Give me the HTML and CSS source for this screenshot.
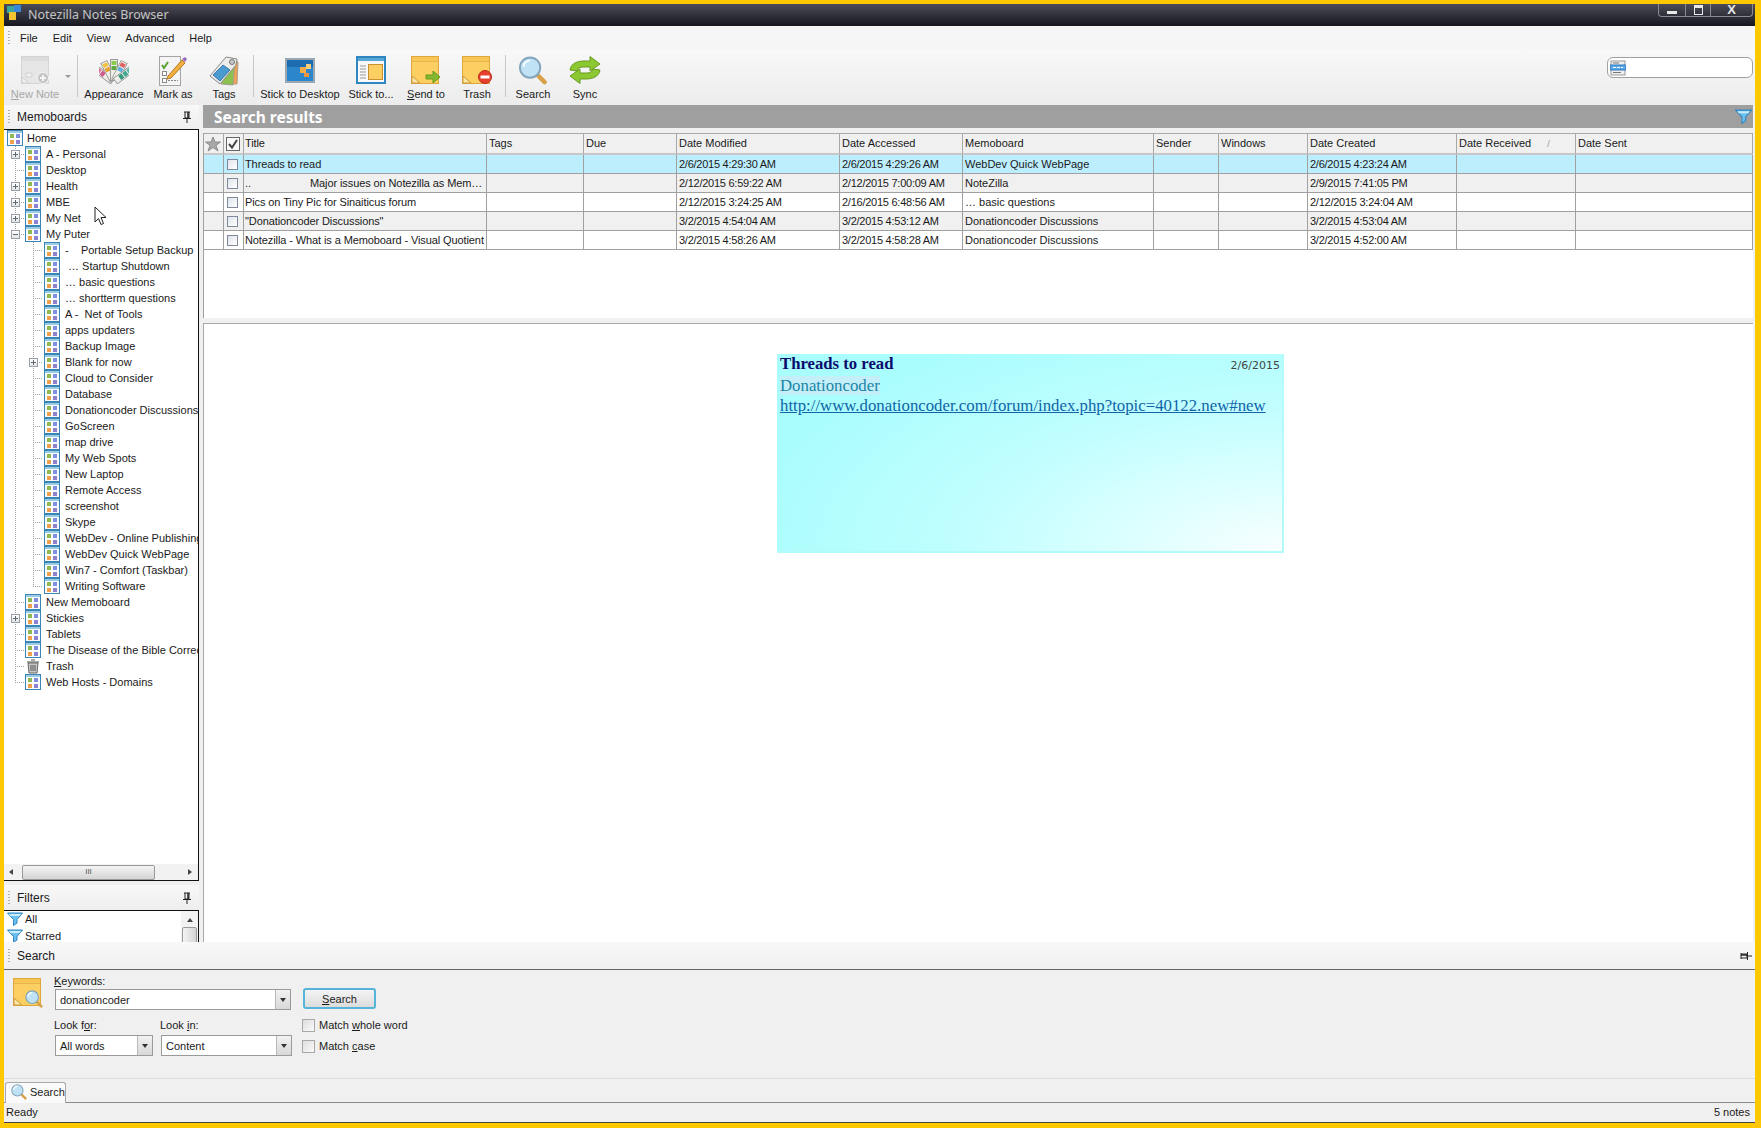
FILE: index.html
```html
<!DOCTYPE html>
<html lang="en">
<head>
    <meta charset="UTF-8">
    <title>Notezilla Notes Browser</title>
    <link rel="stylesheet" href="styles.css">
</head>
<body>

<svg class="defs" width="0" height="0">
    <symbol id="board" viewBox="0 0 16 16">
        <rect x="0.5" y="0.5" width="15" height="15" fill="#f8fbfd" stroke="#3b86b4"/>
        <rect x="1" y="1" width="14" height="2" fill="#9ccbe6"/>
        <rect x="3" y="4" width="4" height="4" fill="#8fb850"/>
        <rect x="9" y="4" width="4" height="4" fill="#7f8fe0"/>
        <rect x="3" y="10" width="4" height="4" fill="#eea04a"/>
        <rect x="9" y="10" width="4" height="4" fill="#8f80d0"/>
    </symbol>
    <symbol id="funnel" viewBox="0 0 16 14">
        <path d="M0.5 1 H15.5 L10 7.5 V11 L6.5 13.5 V7.5 Z" fill="#6cc0ee" stroke="#2f86c0"/>
        <path d="M2 2 H14 L12.5 4 H3.5 Z" fill="#c8ecfb"/>
    </symbol>
    <symbol id="sticky" viewBox="0 0 28 28">
        <rect x="0.5" y="0.5" width="27" height="27" fill="#fbcf62" stroke="#dfa83f"/>
        <rect x="1" y="1" width="26" height="4" fill="#f9c655"/>
        <path d="M1 5.500 H27" stroke="#e8b44c"/>
        <path d="M1 20 L9 27 H1 Z" fill="#fde7a6" stroke="#c9973a"/>
    </symbol>
    <symbol id="lens" viewBox="0 0 30 30">
        <path d="M19 19 L27 27" stroke="#d8a048" stroke-width="4.500" stroke-linecap="round"/>
        <circle cx="12" cy="12" r="10.500" fill="#bfe2f5" stroke="#84a6bc" stroke-width="2"/>
        <path d="M5 11 A7.500 7.500 0 0 1 12 4.500" fill="none" stroke="#fff" stroke-width="2"/>
    </symbol>
    <symbol id="pin" viewBox="0 0 8 12">
        <path d="M1 1 H7 M2 1 V7 H6 V1 M0 7.500 H8 M4 8 V12" fill="none" stroke="#222"/>
        <path d="M5 1 V7" stroke="#222" stroke-width="1.500"/>
    </symbol>
    <symbol id="swatch" viewBox="0 0 8 22">
        <rect x="0.500" y="0.500" width="7" height="21" fill="#f0eee8" stroke="#9a9a9a"/>
    </symbol>
</svg>

<div class="window">
    <div class="titlebar">
        <svg class="app-icon" width="16" height="16" viewBox="0 0 16 16">
            <rect x="1" y="1" width="7" height="7" fill="#3aa6a0"/>
            <rect x="8" y="0" width="7" height="7" fill="#3a86d8"/>
            <rect x="3" y="7" width="7" height="8" fill="#f4c430"/>
        </svg>
        <span class="window-title">Notezilla Notes Browser</span>
        <div class="window-buttons">
            <span class="win-btn win-min"><i></i></span>
            <span class="win-btn win-restore"><i></i></span>
            <span class="win-btn win-close">X</span>
        </div>
    </div>

    <div class="menubar">
        <span class="gripper"></span>
        <span class="menu-item">File</span>
        <span class="menu-item">Edit</span>
        <span class="menu-item">View</span>
        <span class="menu-item">Advanced</span>
        <span class="menu-item">Help</span>
    </div>

    <div class="toolbar">
        <div class="tool tool-new disabled">
            <svg width="32" height="28" viewBox="0 0 32 28">
                <rect x="2.500" y="0.500" width="27" height="27" fill="#e6e6e6" stroke="#d4d4d4"/>
                <rect x="3" y="1" width="26" height="4" fill="#dcdcdc"/>
                <path d="M3 21 L10 27 H3 Z M7 17 H13 V21 H7 Z" fill="#f0f0f0" stroke="#d0d0d0"/>
                <circle cx="24" cy="22" r="5.500" fill="#c4c4c4" stroke="#f4f4f4"/>
                <path d="M24 19 V25 M21 22 H27" stroke="#f6f6f6" stroke-width="2"/>
            </svg>
            <span><u>N</u>ew Note</span>
        </div>
        <span class="tool-drop"></span>
        <span class="tool-sep"></span>
        <div class="tool tool-appearance">
            <svg width="30" height="26" viewBox="0 0 30 26">
                <g transform="rotate(-54 15 24)">
                    <use href="#swatch" x="11" y="1" width="8" height="22"/>
                    <rect x="12.500" y="3" width="5" height="4" fill="#e0709a"/><rect x="12.500" y="8" width="5" height="4" fill="#d05a8a"/>
                </g>
                <g transform="rotate(-27 15 24)">
                    <use href="#swatch" x="11" y="1" width="8" height="22"/>
                    <rect x="12.500" y="3" width="5" height="4" fill="#f0c040"/><rect x="12.500" y="8" width="5" height="4" fill="#e8a030"/>
                </g>
                <g>
                    <use href="#swatch" x="11" y="1" width="8" height="22"/>
                    <rect x="12.500" y="3" width="5" height="4" fill="#8cc850"/><rect x="12.500" y="8" width="5" height="4" fill="#60a840"/>
                </g>
                <g transform="rotate(27 15 24)">
                    <use href="#swatch" x="11" y="1" width="8" height="22"/>
                    <rect x="12.500" y="3" width="5" height="4" fill="#e06060"/><rect x="12.500" y="8" width="5" height="4" fill="#60b0e0"/>
                </g>
                <g transform="rotate(54 15 24)">
                    <use href="#swatch" x="11" y="1" width="8" height="22"/>
                    <rect x="12.500" y="3" width="5" height="4" fill="#50b8a8"/><rect x="12.500" y="8" width="5" height="4" fill="#40a890"/><rect x="12.500" y="13" width="5" height="4" fill="#389880"/>
                </g>
            </svg>
            <span>Appearance</span>
        </div>
        <div class="tool tool-mark">
            <svg width="30" height="30" viewBox="0 0 30 30">
                <rect x="1.500" y="0.500" width="21" height="29" fill="#f4f4f4" stroke="#a4a4a4"/>
                <path d="M4 9 L6 12 L10 6" fill="none" stroke="#58a030" stroke-width="2"/>
                <rect x="4.500" y="15.500" width="4" height="4" fill="#fff" stroke="#888"/>
                <rect x="4.500" y="22.500" width="4" height="4" fill="#fff" stroke="#888"/>
                <path d="M10 24.500 H20" stroke="#888" stroke-dasharray="2 1"/>
                <path d="M10 20 L24 4 L27 7 L13 22 L9 23 Z" fill="#f0b040" stroke="#b87820"/>
                <path d="M24 3 L27 6 L29 3 L27 1 Z" fill="#9a6ac0"/>
            </svg>
            <span>Mark as</span>
        </div>
        <div class="tool tool-tags">
            <svg width="30" height="30" viewBox="0 0 30 30">
                <path d="M22 2 L29 6 L28 28 L18 28 Z" fill="#f0a050" stroke="#b0a090"/>
                <path d="M18 3 L26 4 L24 29 L12 28 Z" fill="#8cc050" stroke="#a0a090"/>
                <path d="M17 1 L28 3 L27 9 L11 28 L1 20 Z" fill="#ecece8" stroke="#8a8a8a"/>
                <path d="M14 9 L21 14 L11 25 L4 19 Z" fill="#4a9ad0" stroke="#3a7ab0"/>
                <circle cx="23" cy="6" r="2.500" fill="#c8c8c8" stroke="#777"/>
            </svg>
            <span>Tags</span>
        </div>
        <span class="tool-sep"></span>
        <div class="tool tool-desktop">
            <svg width="30" height="25" viewBox="0 0 30 25">
                <rect x="1" y="1" width="28" height="23" fill="#2c86cc" stroke="#9aa8b4" stroke-width="2"/>
                <rect x="2" y="2" width="26" height="7" fill="#1e6cb0"/>
                <rect x="15" y="9" width="6" height="6" fill="#f2ad4a"/>
                <rect x="21" y="6" width="5" height="5" fill="#f6cd7a"/>
                <rect x="19" y="15" width="5" height="4" fill="#ea9440"/>
            </svg>
            <span>Stick to Desktop</span>
        </div>
        <div class="tool tool-stick">
            <svg width="30" height="28" viewBox="0 0 30 28">
                <rect x="1" y="1" width="28" height="26" fill="#f8f8f8" stroke="#2f86c0" stroke-width="2"/>
                <rect x="2" y="2" width="26" height="3" fill="#58a8d8"/>
                <path d="M4 10 H10 M4 13 H10 M4 16 H10 M4 19 H10 M4 22 H10" stroke="#999"/>
                <rect x="12.500" y="8.500" width="14" height="15" fill="#fbcf62" stroke="#c89030"/>
            </svg>
            <span>Stick to...</span>
        </div>
        <div class="tool tool-send">
            <svg width="30" height="28" viewBox="0 0 30 28">
                <use href="#sticky" width="28" height="28"/>
                <path d="M15 19 H22 V15 L29 21 L22 27 V23 H15 Z" fill="#84b830" stroke="#6a9a20"/>
            </svg>
            <span><u>S</u>end to</span>
        </div>
        <div class="tool tool-trash">
            <svg width="30" height="28" viewBox="0 0 30 28">
                <use href="#sticky" width="28" height="28"/>
                <circle cx="23" cy="21" r="6.500" fill="#e8402e" stroke="#b82c1e"/>
                <rect x="18.500" y="19.500" width="9" height="3" fill="#fff"/>
            </svg>
            <span>Trash</span>
        </div>
        <span class="tool-sep"></span>
        <div class="tool tool-search">
            <svg width="30" height="29" viewBox="0 0 30 30"><use href="#lens"/></svg>
            <span>Search</span>
        </div>
        <div class="tool tool-sync">
            <svg width="32" height="28" viewBox="0 0 32 28">
                <path d="M1 14 C2 7 9 5 15 5 H21 V0.500 L31 8 L21 15 V11 H14 C11 11 9 12 8 15 Z" fill="#8cc832" stroke="#6a9a20"/>
                <path d="M31 14 C30 21 23 23 17 23 H11 V27.500 L1 20 L11 13 V17 H18 C21 17 23 16 24 13 Z" fill="#8cc832" stroke="#6a9a20"/>
            </svg>
            <span>Sync</span>
        </div>
        <div class="quick-search">
            <svg width="16" height="16" viewBox="0 0 16 16">
                <rect x="1" y="1" width="14" height="14" fill="#eee" stroke="#999"/>
                <rect x="0" y="5" width="16" height="5" fill="#5aa8e8" stroke="#2f78c0"/>
                <path d="M3 3 H9 M3 12.500 H11" stroke="#777"/>
                <path d="M3 7.500 H13" stroke="#fff" stroke-dasharray="3 1"/>
            </svg>
        </div>
    </div>

    <div class="main">
        <aside class="sidebar">
            <div class="pane-head memoboards-head">
                <span class="gripper"></span>
                <span class="pane-title">Memoboards</span>
                <svg class="pin"><use href="#pin"/></svg>
            </div>
            <div class="tree-box">
                <div class="tree">
                    <div class="row home"><svg class="board"><use href="#board"/></svg><span>Home</span></div>
                    <ul class="level">
                        <li><div class="row"><span class="gutter"><b class="exp"></b></span><svg class="board"><use href="#board"/></svg><span>A - Personal</span></div></li>
                        <li><div class="row"><span class="gutter"></span><svg class="board"><use href="#board"/></svg><span>Desktop</span></div></li>
                        <li><div class="row"><span class="gutter"><b class="exp"></b></span><svg class="board"><use href="#board"/></svg><span>Health</span></div></li>
                        <li><div class="row"><span class="gutter"><b class="exp"></b></span><svg class="board"><use href="#board"/></svg><span>MBE</span></div></li>
                        <li><div class="row"><span class="gutter"><b class="exp"></b></span><svg class="board"><use href="#board"/></svg><span>My Net</span></div></li>
                        <li>
                            <div class="row"><span class="gutter"><b class="exp open"></b></span><svg class="board"><use href="#board"/></svg><span>My Puter</span></div>
                            <ul class="level sub">
                                <li><div class="row"><span class="gutter"></span><svg class="board"><use href="#board"/></svg><span>-    Portable Setup Backup</span></div></li>
                                <li><div class="row"><span class="gutter"></span><svg class="board"><use href="#board"/></svg><span> … Startup Shutdown</span></div></li>
                                <li><div class="row"><span class="gutter"></span><svg class="board"><use href="#board"/></svg><span>… basic questions</span></div></li>
                                <li><div class="row"><span class="gutter"></span><svg class="board"><use href="#board"/></svg><span>… shortterm questions</span></div></li>
                                <li><div class="row"><span class="gutter"></span><svg class="board"><use href="#board"/></svg><span>A -  Net of Tools</span></div></li>
                                <li><div class="row"><span class="gutter"></span><svg class="board"><use href="#board"/></svg><span>apps updaters</span></div></li>
                                <li><div class="row"><span class="gutter"></span><svg class="board"><use href="#board"/></svg><span>Backup Image</span></div></li>
                                <li><div class="row"><span class="gutter"><b class="exp"></b></span><svg class="board"><use href="#board"/></svg><span>Blank for now</span></div></li>
                                <li><div class="row"><span class="gutter"></span><svg class="board"><use href="#board"/></svg><span>Cloud to Consider</span></div></li>
                                <li><div class="row"><span class="gutter"></span><svg class="board"><use href="#board"/></svg><span>Database</span></div></li>
                                <li><div class="row"><span class="gutter"></span><svg class="board"><use href="#board"/></svg><span>Donationcoder Discussions</span></div></li>
                                <li><div class="row"><span class="gutter"></span><svg class="board"><use href="#board"/></svg><span>GoScreen</span></div></li>
                                <li><div class="row"><span class="gutter"></span><svg class="board"><use href="#board"/></svg><span>map drive</span></div></li>
                                <li><div class="row"><span class="gutter"></span><svg class="board"><use href="#board"/></svg><span>My Web Spots</span></div></li>
                                <li><div class="row"><span class="gutter"></span><svg class="board"><use href="#board"/></svg><span>New Laptop</span></div></li>
                                <li><div class="row"><span class="gutter"></span><svg class="board"><use href="#board"/></svg><span>Remote Access</span></div></li>
                                <li><div class="row"><span class="gutter"></span><svg class="board"><use href="#board"/></svg><span>screenshot</span></div></li>
                                <li><div class="row"><span class="gutter"></span><svg class="board"><use href="#board"/></svg><span>Skype</span></div></li>
                                <li><div class="row"><span class="gutter"></span><svg class="board"><use href="#board"/></svg><span>WebDev - Online Publishing</span></div></li>
                                <li><div class="row"><span class="gutter"></span><svg class="board"><use href="#board"/></svg><span>WebDev Quick WebPage</span></div></li>
                                <li><div class="row"><span class="gutter"></span><svg class="board"><use href="#board"/></svg><span>Win7 - Comfort (Taskbar)</span></div></li>
                                <li class="last"><div class="row"><span class="gutter"></span><svg class="board"><use href="#board"/></svg><span>Writing Software</span></div></li>
                            </ul>
                        </li>
                        <li><div class="row"><span class="gutter"></span><svg class="board"><use href="#board"/></svg><span>New Memoboard</span></div></li>
                        <li><div class="row"><span class="gutter"><b class="exp"></b></span><svg class="board"><use href="#board"/></svg><span>Stickies</span></div></li>
                        <li><div class="row"><span class="gutter"></span><svg class="board"><use href="#board"/></svg><span>Tablets</span></div></li>
                        <li><div class="row"><span class="gutter"></span><svg class="board"><use href="#board"/></svg><span>The Disease of the Bible Correction</span></div></li>
                        <li><div class="row"><span class="gutter"></span><svg class="board" viewBox="0 0 16 16">
                                <path d="M3 5 H13 L12 15 H4 Z" fill="#c8c8c8" stroke="#666"/>
                                <path d="M2 4 H14 M6 2 H10 M6 7 V13 M8 7 V13 M10 7 V13" stroke="#555"/>
                            </svg><span>Trash</span></div></li>
                        <li class="last"><div class="row"><span class="gutter"></span><svg class="board"><use href="#board"/></svg><span>Web Hosts - Domains</span></div></li>
                    </ul>
                </div>
                <div class="hscroll">
                    <span class="arrow-left"></span>
                    <span class="hthumb">III</span>
                    <span class="arrow-right"></span>
                </div>
            </div>
            <div class="pane-head filters-head">
                <span class="gripper"></span>
                <span class="pane-title">Filters</span>
                <svg class="pin"><use href="#pin"/></svg>
            </div>
            <div class="filter-box">
                <div class="filter-list">
                    <div class="filter-row"><svg class="funnel"><use href="#funnel"/></svg><span>All</span></div>
                    <div class="filter-row"><svg class="funnel"><use href="#funnel"/></svg><span>Starred</span></div>
                </div>
                <div class="vscroll">
                    <span class="arrow-up"></span>
                    <span class="vthumb"></span>
                </div>
            </div>
        </aside>

        <section class="content">
            <div class="results-bar">
                <span>Search results</span>
                <svg class="results-funnel"><use href="#funnel"/></svg>
            </div>
            <div class="list-pane">
                <table class="notes">
                    <colgroup>
                        <col class="c-star"><col class="c-check"><col class="c-title"><col class="c-tags"><col class="c-due">
                        <col class="c-mod"><col class="c-acc"><col class="c-board"><col class="c-sender"><col class="c-win">
                        <col class="c-created"><col class="c-recv"><col class="c-sent">
                    </colgroup>
                    <thead>
                        <tr>
                            <th class="icon-cell">
                                <svg width="16" height="16" viewBox="0 0 16 16"><path d="M8 1 L10 6 H15.500 L11 9.500 L13 15 L8 11.500 L3 15 L5 9.500 L0.500 6 H6 Z" fill="#a8a8a8" stroke="#8c8c8c"/></svg>
                            </th>
                            <th class="icon-cell">
                                <svg width="14" height="14" viewBox="0 0 14 14"><rect x="0.500" y="0.500" width="13" height="13" fill="#f8f8f8" stroke="#666"/><path d="M3 7 L6 10.500 L11 3" fill="none" stroke="#444" stroke-width="2"/></svg>
                            </th>
                            <th>Title</th><th>Tags</th><th>Due</th><th>Date Modified</th><th>Date Accessed</th><th>Memoboard</th>
                            <th>Sender</th><th>Windows</th><th>Date Created</th><th class="sorted">Date Received<i>/</i></th><th>Date Sent</th>
                        </tr>
                    </thead>
                    <tbody>
                        <tr class="selected">
                            <td></td><td class="icon-cell"><span class="box"></span></td><td>Threads to read</td><td></td><td></td>
                            <td>2/6/2015 4:29:30 AM</td><td>2/6/2015 4:29:26 AM</td><td>WebDev Quick WebPage</td><td></td><td></td>
                            <td>2/6/2015 4:23:24 AM</td><td></td><td></td>
                        </tr>
                        <tr class="alt">
                            <td></td><td class="icon-cell"><span class="box"></span></td><td>..                    Major issues on Notezilla as Mem…</td><td></td><td></td>
                            <td>2/12/2015 6:59:22 AM</td><td>2/12/2015 7:00:09 AM</td><td>NoteZilla</td><td></td><td></td>
                            <td>2/9/2015 7:41:05 PM</td><td></td><td></td>
                        </tr>
                        <tr>
                            <td></td><td class="icon-cell"><span class="box"></span></td><td>Pics on Tiny Pic for Sinaiticus forum</td><td></td><td></td>
                            <td>2/12/2015 3:24:25 AM</td><td>2/16/2015 6:48:56 AM</td><td>… basic questions</td><td></td><td></td>
                            <td>2/12/2015 3:24:04 AM</td><td></td><td></td>
                        </tr>
                        <tr class="alt">
                            <td></td><td class="icon-cell"><span class="box"></span></td><td>"Donationcoder Discussions"</td><td></td><td></td>
                            <td>3/2/2015 4:54:04 AM</td><td>3/2/2015 4:53:12 AM</td><td>Donationcoder Discussions</td><td></td><td></td>
                            <td>3/2/2015 4:53:04 AM</td><td></td><td></td>
                        </tr>
                        <tr>
                            <td></td><td class="icon-cell"><span class="box"></span></td><td>Notezilla - What is a Memoboard - Visual Quotient</td><td></td><td></td>
                            <td>3/2/2015 4:58:26 AM</td><td>3/2/2015 4:58:28 AM</td><td>Donationcoder Discussions</td><td></td><td></td>
                            <td>3/2/2015 4:52:00 AM</td><td></td><td></td>
                        </tr>
                    </tbody>
                </table>
            </div>
            <div class="preview-pane">
                <div class="note">
                    <div class="note-head">
                        <span class="note-title">Threads to read</span>
                        <span class="note-date">2/6/2015</span>
                    </div>
                    <div class="note-body">
                        <span class="note-hl">Donationcoder</span><br>
                        <a class="note-link">http://www.donationcoder.com/forum/index.php?topic=40122.new#new</a>
                    </div>
                </div>
            </div>
        </section>
    </div>

    <div class="search-head">
        <span class="gripper"></span>
        <span class="pane-title">Search</span>
        <svg class="pin pin-side"><use href="#pin"/></svg>
    </div>
    <div class="search-body">
        <svg class="search-icon" width="30" height="30" viewBox="0 0 30 30">
            <use href="#sticky" width="28" height="28"/>
            <use href="#lens" x="12" y="12" width="18" height="18"/>
        </svg>
        <form class="search-form">
            <label class="lbl lbl-keywords"><u>K</u>eywords:</label>
            <div class="combo combo-keywords"><span>donationcoder</span><b></b></div>
            <button type="button" class="search-btn"><u>S</u>earch</button>
            <label class="lbl lbl-look">Look f<u>o</u>r:</label>
            <label class="lbl lbl-look">Look <u>i</u>n:</label>
            <div class="combo combo-for"><span>All words</span><b></b></div>
            <div class="combo combo-in"><span>Content</span><b></b></div>
            <div class="checks">
                <div class="check"><span class="box-big"></span><span>Match <u>w</u>hole word</span></div>
                <div class="check"><span class="box-big"></span><span>Match <u>c</u>ase</span></div>
            </div>
        </form>
    </div>
    <div class="tabbar">
        <div class="tab">
            <svg width="16" height="16" viewBox="0 0 30 30"><use href="#lens"/></svg>
            <span>Search</span>
        </div>
    </div>
    <div class="statusbar">
        <span>Ready</span>
        <span>5 notes</span>
    </div>

    <svg class="cursor" width="13" height="20" viewBox="0 0 13 20">
        <path d="M1 1 V16 L4.500 12.500 L7 18.500 L9.500 17.500 L7 11.500 H12 Z" fill="#fff" stroke="#222"/>
    </svg>
</div>

</body>
</html>
```

FILE: styles.css
```css
* {
    box-sizing: border-box;
}
html, body {
    margin: 0;
    height: 100%;
}
body {
    width: 1761px;
    height: 1128px;
    overflow: hidden;
    background: #ffc800;
    font-family: "Liberation Sans", sans-serif;
    font-size: 11px;
    color: #1a1a1a;
    padding: 4px 6px 5px 4px;
}
.defs {
    position: absolute;
}
.window {
    position: relative;
    width: 1751px;
    height: 1119px;
    background: #f0f0f0;
    display: flex;
    flex-direction: column;
    overflow: hidden;
}

/* title bar */
.titlebar {
    flex: 0 0 22px;
    display: flex;
    align-items: flex-start;
    background: linear-gradient(#4c4c58, #17171f);
    padding: 0 2px 0 2px;
}
.app-icon {
    margin-top: 1px;
}
.window-title {
    margin-left: 6px;
    margin-top: 2px;
    font-family: "Noto Sans", sans-serif;
    font-size: 12.5px;
    line-height: 18px;
    color: #c4c4c4;
}
.window-buttons {
    margin-left: auto;
    display: flex;
    height: 13px;
    border: 1px solid #8a8a90;
    border-top: 0;
    border-radius: 0 0 4px 4px;
}
.win-btn {
    display: flex;
    align-items: center;
    justify-content: center;
    color: #e8e8e8;
    font-weight: bold;
    font-size: 13px;
    line-height: 12px;
    border-right: 1px solid #8a8a90;
}
.win-min {
    width: 27px;
}
.win-min i {
    width: 10px;
    height: 3px;
    margin-top: 5px;
    background: #e8e8e8;
}
.win-restore {
    width: 25px;
}
.win-restore i {
    width: 9px;
    height: 10px;
    border: 1px solid #e8e8e8;
    border-top-width: 3px;
}
.win-close {
    width: 41px;
    border-right: 0;
}

/* menu */
.menubar {
    flex: 0 0 24px;
    display: flex;
    align-items: center;
    background: #f6f6f6;
    padding-left: 4px;
}
.gripper {
    flex: none;
    width: 2px;
    height: 14px;
    background: repeating-linear-gradient(#b0b0b0 0 1px, transparent 1px 3px);
}
.menu-item {
    margin-right: 15px;
}
.gripper + .menu-item {
    margin-left: 10px;
}

/* toolbar */
.toolbar {
    flex: 0 0 55px;
    display: flex;
    background: linear-gradient(#f8f8f8, #ececec);
    padding: 0 2px 0 4px;
}
.tool {
    display: flex;
    flex-direction: column;
    align-items: center;
    justify-content: flex-end;
    height: 51px;
    margin-top: 1px;
    white-space: nowrap;
}
.tool span {
    line-height: 15px;
}
.tool svg {
    margin-bottom: 3px;
}
.tool-mark svg, .tool-tags svg {
    margin-bottom: 1px;
}
.tool-search svg {
    margin-bottom: 2px;
}
.tool-desktop svg {
    margin-bottom: 4px;
}
.disabled {
    color: #a8a8a8;
}
.tool-new { width: 54px; }
.tool-appearance { width: 62px; }
.tool-mark { width: 50px; margin-left: 3px; }
.tool-tags { width: 40px; margin-left: 6px; margin-right: 3px; }
.tool-desktop { width: 82px; }
.tool-stick { width: 54px; margin-left: 3px; }
.tool-send { width: 50px; margin-left: 3px; }
.tool-trash { width: 44px; margin-left: 4px; }
.tool-search { width: 44px; }
.tool-sync { width: 44px; margin-left: 8px; }
.tool-drop {
    width: 0;
    height: 0;
    margin: 25px 0 0 3px;
    border: 3px solid transparent;
    border-top-color: #999;
}
.tool-sep {
    width: 1px;
    height: 42px;
    margin: 5px 5px 0 6px;
    background: #c8c8c8;
}
.quick-search {
    margin: 7px 0 0 auto;
    width: 146px;
    height: 21px;
    background: #fff;
    border: 1px solid #a0a0a0;
    border-radius: 6px;
    padding: 1px 2px;
    display: flex;
    align-items: center;
}

/* left side */
.main {
    flex: 0 0 837px;
    display: flex;
    overflow: hidden;
}
.sidebar {
    width: 199px;
    flex: none;
    display: flex;
    flex-direction: column;
    overflow: hidden;
}
.pane-head {
    display: flex;
    align-items: center;
    padding-left: 4px;
    width: 195px;
    background: linear-gradient(#f8f8f8, #eeeeee);
}
.memoboards-head {
    flex: 0 0 24px;
}
.filters-head {
    flex: 0 0 25px;
    margin-top: 4px;
}
.pane-title {
    margin-left: 7px;
    font-size: 12px;
}
.pin {
    flex: none;
    margin-left: auto;
    margin-right: 8px;
    width: 8px;
    height: 12px;
}
.pin-side {
    margin-right: 5px;
    transform: rotate(-90deg);
}
.tree-box {
    flex: 0 0 752px;
    width: 195px;
    display: flex;
    flex-direction: column;
    background: #fff;
    border: 1px solid #111;
    border-left: 0;
}
.tree {
    flex: 1;
    overflow: hidden;
    background: #fff;
}
.level {
    list-style: none;
    margin: 0;
    padding: 0;
}
.level li {
    background: repeating-linear-gradient(#a0a0a0 0 1px, transparent 1px 2px) 11px 0 / 1px 100% no-repeat;
}
.level li.last {
    background-size: 1px 8px;
}
.level.sub {
    margin-left: 18px;
}
.level.sub .gutter {
    width: 22px;
}
.row {
    height: 16px;
    display: flex;
    align-items: center;
    line-height: 16px;
    white-space: pre;
}
.home {
    padding-left: 3px;
}
.home .board {
    margin-right: 4px;
}
.gutter {
    flex: none;
    width: 21px;
    height: 16px;
    display: flex;
    align-items: center;
    padding-left: 7px;
    background: repeating-linear-gradient(to right, #a0a0a0 0 1px, transparent 1px 2px) 11px 8px / 10px 1px no-repeat;
}
.exp {
    width: 9px;
    height: 9px;
    background: linear-gradient(#606870, #606870) center / 5px 1px no-repeat, linear-gradient(#606870, #606870) center / 1px 5px no-repeat, linear-gradient(#fff, #e4e4e4);
    border: 1px solid #97a0a8;
}
.exp.open {
    background: linear-gradient(#606870, #606870) center / 5px 1px no-repeat, linear-gradient(#fff, #e4e4e4);
}
.board {
    flex: none;
    width: 16px;
    height: 16px;
    margin-right: 5px;
}
.hscroll {
    flex: 0 0 16px;
    display: flex;
    align-items: center;
    background: #f2f2f2;
    padding: 0 6px 0 5px;
}
.arrow-left, .arrow-right {
    width: 0;
    height: 0;
    border: 3px solid transparent;
}
.arrow-left {
    border-right: 4px solid #444;
    border-left: 0;
}
.arrow-right {
    margin-left: auto;
    border-left: 4px solid #444;
    border-right: 0;
}
.hthumb {
    width: 133px;
    height: 15px;
    margin-left: 9px;
    border: 1px solid #9a9a9a;
    border-radius: 2px;
    background: linear-gradient(#f4f4f4, #d4d4d4);
    text-align: center;
    font-size: 8px;
    line-height: 12px;
    color: #555;
}
.filter-box {
    flex: 1;
    width: 195px;
    display: flex;
    background: #fff;
    border: 1px solid #111;
    border-left: 0;
    border-bottom: 0;
}
.filter-list {
    flex: 1;
    margin-top: -1px;
}
.filter-row {
    height: 17px;
    display: flex;
    align-items: center;
    padding-left: 3px;
}
.funnel {
    width: 16px;
    height: 14px;
    margin-right: 2px;
}
.vscroll {
    width: 17px;
    background: #f2f2f2;
    display: flex;
    flex-direction: column;
    align-items: center;
}
.arrow-up {
    width: 0;
    height: 0;
    margin: 7px 0 5px;
    border: 3px solid transparent;
    border-bottom: 4px solid #444;
    border-top: 0;
}
.vthumb {
    width: 15px;
    height: 30px;
    border: 1px solid #9a9a9a;
    border-radius: 2px;
    background: linear-gradient(to right, #f4f4f4, #d4d4d4);
}

/* results list */
.content {
    flex: 1;
    display: flex;
    flex-direction: column;
    padding-right: 2px;
    min-width: 0;
}
.results-bar {
    flex: 0 0 23px;
    display: flex;
    align-items: center;
    justify-content: space-between;
    background: #9f9f9f;
    color: #fff;
    font-family: "Noto Sans", sans-serif;
    font-weight: bold;
    font-size: 15.5px;
    padding: 0 1px 0 11px;
}
.results-funnel {
    width: 17px;
    height: 15px;
}
.list-pane {
    flex: 0 0 185px;
    margin-top: 5px;
    background: #fff;
    border-left: 1px solid #a0a0a0;
}
.notes {
    width: 1549px;
    table-layout: fixed;
    border-collapse: separate;
    border-spacing: 0;
}
.c-star { width: 20px; }
.c-check { width: 20px; }
.c-title { width: 243px; }
.c-tags { width: 97px; }
.c-due { width: 93px; }
.c-mod { width: 163px; }
.c-acc { width: 123px; }
.c-board { width: 191px; }
.c-sender { width: 65px; }
.c-win { width: 89px; }
.c-created { width: 149px; }
.c-recv { width: 119px; }
.c-sent { width: 177px; }
.notes th {
    height: 22px;
    padding: 0 2px 2px;
    background: #f0f0f0;
    font-weight: normal;
    text-align: left;
    border-top: 1px solid #a8a8a8;
    border-right: 1px solid #a8a8a8;
    border-bottom: 2px solid #c8c8c8;
    white-space: nowrap;
    overflow: hidden;
}
.notes td {
    height: 19px;
    padding: 0 2px;
    border-right: 1px solid #a0a0a0;
    border-bottom: 1px solid #a0a0a0;
    white-space: pre;
    overflow: hidden;
    line-height: 16px;
}
.notes td:nth-child(3), .notes th:nth-child(3) {
    padding-left: 1px;
    letter-spacing: -0.1px;
}
.notes td:nth-child(6), .notes td:nth-child(7), .notes td:nth-child(11) {
    letter-spacing: -0.25px;
}
.notes .icon-cell {
    padding: 0 2px 0 0;
    text-align: center;
}
.notes .icon-cell svg {
    display: block;
    margin: 0 auto;
}
.sorted i {
    margin-left: 16px;
    font-style: normal;
    font-size: 9px;
    color: #999;
}
.selected td {
    background: #bdeefe;
}
.alt td {
    background: #f0f0f0;
}
.box {
    display: block;
    width: 11px;
    height: 11px;
    margin: 0 auto;
    border: 1px solid #7f8a9c;
    background: linear-gradient(135deg, #dfe4ea, #fff);
}

/* note preview */
.preview-pane {
    flex: 1;
    margin-top: 5px;
    background: #fff;
    border-top: 1px solid #a8a8a8;
    border-left: 1px solid #a8a8a8;
    padding: 30px 0 0 573px;
}
.note {
    width: 507px;
    height: 199px;
    padding: 0 2px 0 3px;
    background: radial-gradient(ellipse 110% 130% at 100% 100%, #f8ffff 0%, #dcffff 28%, #c0feff 58%, #a9fdfd 100%);
    border-right: 2px solid #b5fafa;
    border-bottom: 2px solid #b5fafa;
    font-family: "Liberation Serif", serif;
}
.note-head {
    display: flex;
    justify-content: space-between;
    align-items: baseline;
}
.note-title {
    font-weight: bold;
    font-size: 16.7px;
    line-height: 19px;
    color: #0b0b6c;
}
.note-date {
    font-family: "DejaVu Sans", sans-serif;
    font-size: 11px;
    color: #444;
}
.note-body {
    font-size: 16.8px;
    line-height: 20px;
    margin-top: 3px;
}
.note-hl {
    color: #1a86a8;
    background: #c4eef8;
}
.note-link {
    color: #1064a8;
    text-decoration: underline;
}

/* search pane */
.search-head {
    flex: 0 0 28px;
    display: flex;
    align-items: center;
    padding: 1px 0 0 4px;
    background: linear-gradient(#f8f8f8, #f0f0f0);
    border-bottom: 1px solid #666;
}
.search-body {
    flex: 0 0 108px;
    display: flex;
    padding: 4px 0 0 9px;
    background: #f0f0f0;
}
.search-icon {
    flex: none;
    margin: 4px 12px 0 0;
}
.search-form {
    display: grid;
    grid-template-columns: 98px 131px 220px;
    column-gap: 8px;
    grid-template-rows: 15px 21px 25px 21px;
    align-content: start;
}
.lbl {
    display: block;
    line-height: 14px;
    white-space: nowrap;
}
.lbl-keywords {
    grid-column: 1 / 4;
    margin-left: -1px;
}
.lbl-look {
    grid-row: 3;
    align-self: end;
    margin-bottom: 3px;
    margin-left: -1px;
}
.combo {
    display: flex;
    align-items: center;
    justify-content: space-between;
    background: #fff;
    border: 1px solid #9a9a9a;
    padding-left: 4px;
}
.combo b {
    width: 15px;
    height: 19px;
    border-left: 1px solid #b8b8b8;
    background: linear-gradient(#f2f2f2, #d8d8d8);
    position: relative;
}
.combo b::after {
    content: "";
    position: absolute;
    left: 4px;
    top: 8px;
    border: 3px solid transparent;
    border-top: 4px solid #333;
    border-bottom: 0;
}
.combo-keywords {
    grid-column: 1 / 3;
    grid-row: 2;
    margin-right: 1px;
}
.combo-for, .combo-in {
    grid-row: 4;
}
.search-btn {
    grid-row: 2;
    grid-column: 3;
    width: 73px;
    height: 21px;
    margin-left: 3px;
    margin-top: -1px;
    padding: 0;
    font: inherit;
    color: inherit;
    background: linear-gradient(#f4f4f4, #dcdcdc);
    border: 2px solid #55b4d8;
    border-radius: 3px;
}
.checks {
    grid-column: 3;
    grid-row: 3 / 5;
    display: flex;
    flex-direction: column;
    gap: 7px;
    margin: 8px 0 0 2px;
}
.check {
    display: flex;
    align-items: center;
    gap: 4px;
    height: 14px;
}
.box-big {
    width: 13px;
    height: 13px;
    border: 1px solid #a8a8a8;
    background: linear-gradient(135deg, #dedede, #fafafa);
}
.tabbar {
    flex: 0 0 25px;
    display: flex;
    align-items: flex-end;
    padding-left: 1px;
    background: #f0f0f0;
    border-top: 1px solid #dcdcdc;
    border-bottom: 1px solid #8c8c8c;
}
.tab {
    width: 61px;
    height: 21px;
    margin-bottom: -1px;
    display: flex;
    align-items: center;
    gap: 3px;
    padding: 0 0 2px 5px;
    background: #fafafa;
    border: 1px solid #a8a8a8;
    border-bottom: 0;
    border-radius: 3px 3px 0 0;
}
.statusbar {
    flex: 0 0 20px;
    display: flex;
    justify-content: space-between;
    align-items: center;
    padding: 0 5px 2px 2px;
    background: #f0f0f0;
    border-bottom: 1px solid #444;
}
.cursor {
    position: absolute;
    left: 90px;
    top: 202px;
}
```
